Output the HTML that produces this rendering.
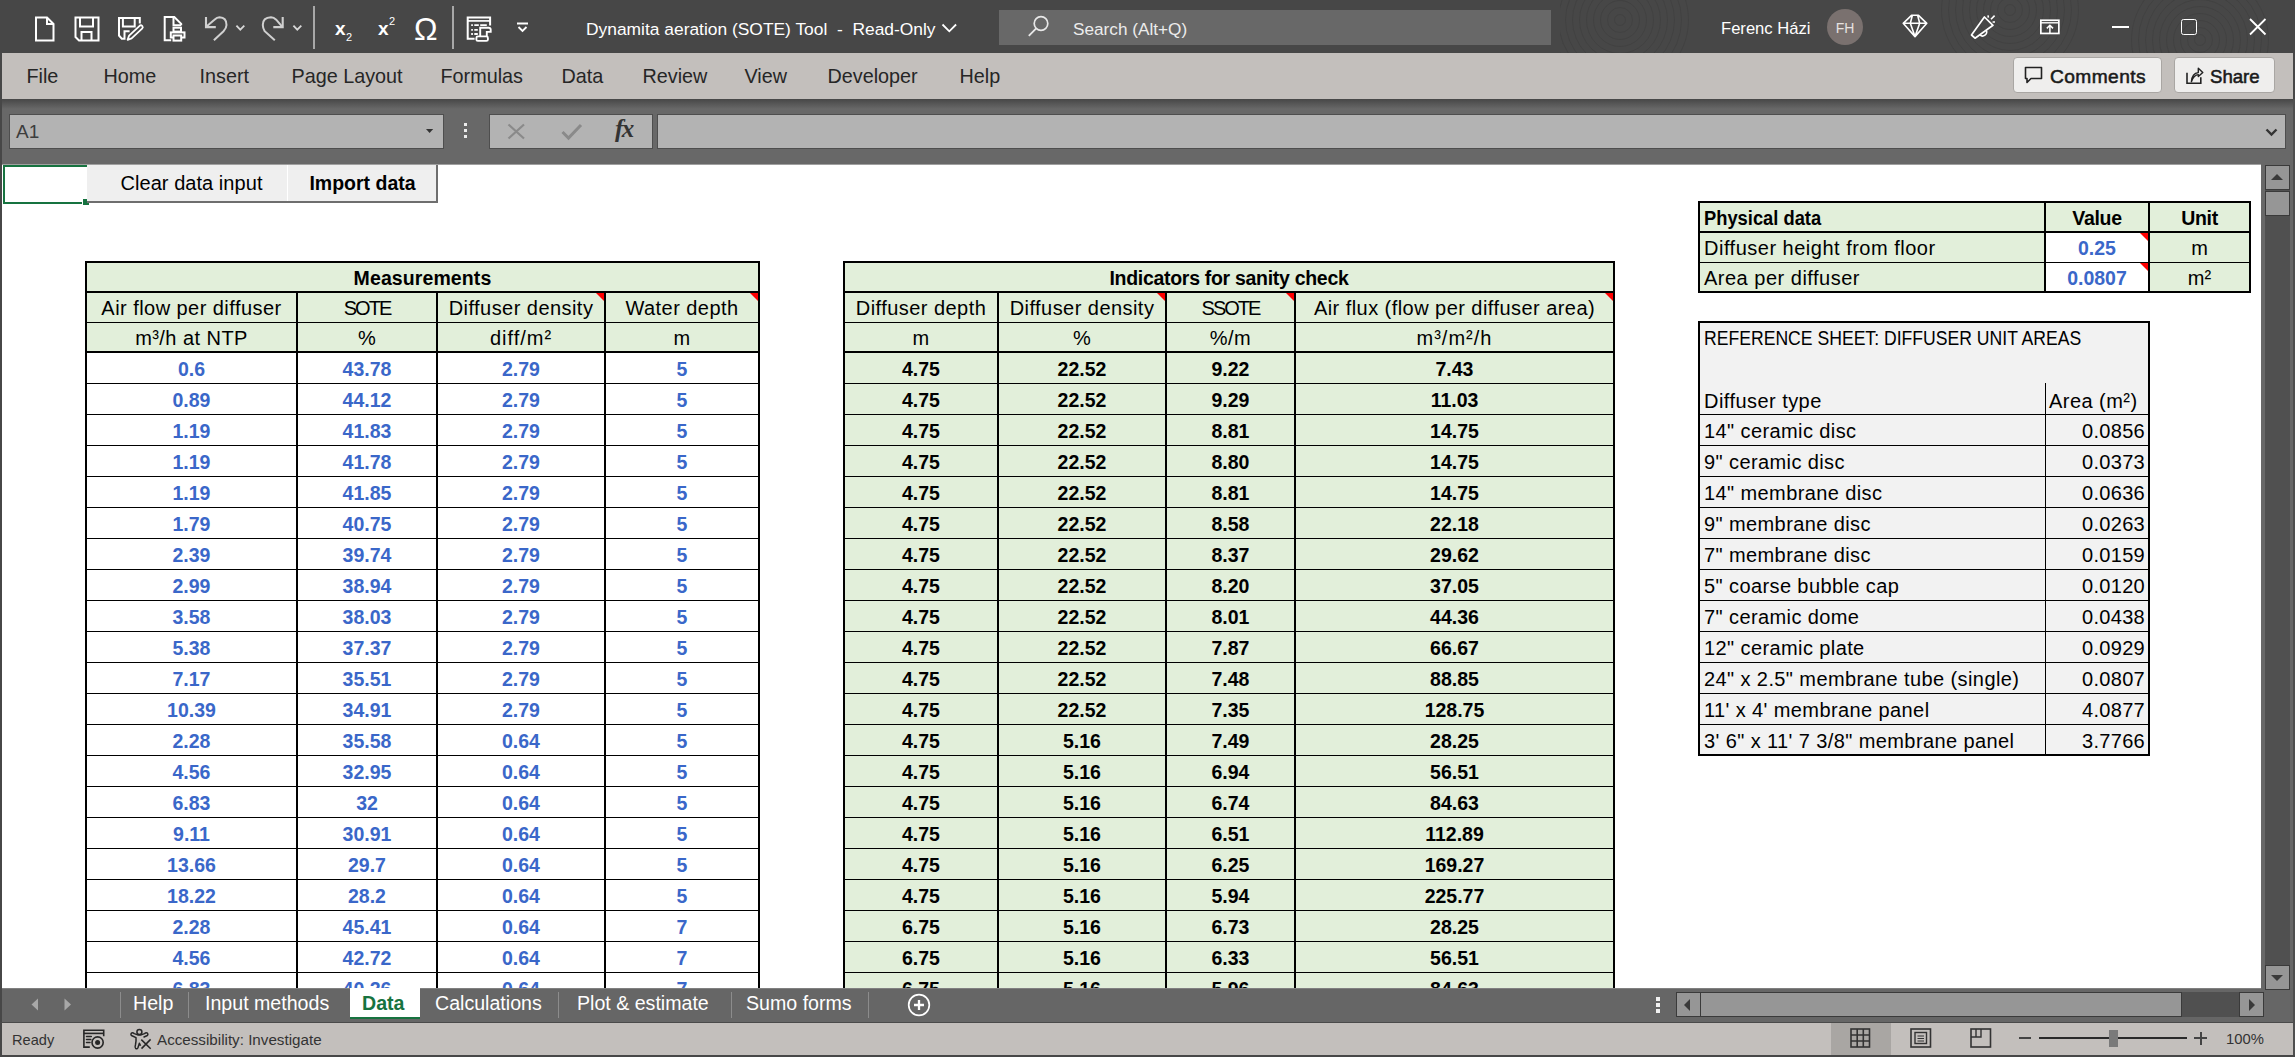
<!DOCTYPE html><html><head><meta charset="utf-8"><title>Dynamita aeration (SOTE) Tool - Excel</title><style>html,body{margin:0;padding:0;}body{width:2295px;height:1057px;overflow:hidden;position:relative;background:#474747;font-family:"Liberation Sans",sans-serif;}div{box-sizing:border-box;}svg{position:absolute;overflow:visible;}</style></head><body><div style="position:absolute;left:0px;top:0px;width:2295px;height:53px;background:#474747;"></div><div style="position:absolute;left:2px;top:53px;width:2291px;height:46px;background:#c3bfbc;"></div><div style="position:absolute;left:2px;top:99px;width:2291px;height:65px;background:#686868;"></div><div style="position:absolute;left:2px;top:99px;width:2291px;height:10px;background:linear-gradient(#474747,#686868);"></div><div style="position:absolute;left:2px;top:164px;width:2259px;height:824px;background:#ffffff;"></div><div style="position:absolute;left:2px;top:164px;width:2259px;height:1px;background:#a0a0a0;"></div><div style="position:absolute;left:2261px;top:164px;width:32px;height:824px;background:#686868;"></div><div style="position:absolute;left:0px;top:988px;width:2295px;height:34px;background:#474747;"></div><div style="position:absolute;left:2px;top:988px;width:2291px;height:34px;background:#666666;"></div><div style="position:absolute;left:2px;top:988px;width:2259px;height:1px;background:#808080;"></div><div style="position:absolute;left:0px;top:1022px;width:2295px;height:1px;background:#4a4a4a;"></div><div style="position:absolute;left:2px;top:1023px;width:2291px;height:32px;background:#c3bfbc;"></div><div style="position:absolute;left:0px;top:1055px;width:2295px;height:2px;background:#474747;"></div><svg style="left:34px;top:16px" width="22" height="26" viewBox="0 0 22 26"><path d="M2 1.5H13L19.5 8V24.5H2Z M13 1.5V8H19.5" fill="none" stroke="#fff" stroke-width="2" stroke-linejoin="miter"/></svg><svg style="left:74px;top:16px" width="26" height="26" viewBox="0 0 26 26"><path d="M1.5 1.5H24.5V24.5H5L1.5 21Z" fill="none" stroke="#fff" stroke-width="2"/><path d="M6 1.5V10.5H19V1.5" fill="none" stroke="#fff" stroke-width="2"/><path d="M7.5 24.5V16H17.5V24.5" fill="none" stroke="#fff" stroke-width="2"/></svg><svg style="left:117px;top:16px" width="28" height="28" viewBox="0 0 28 28"><path d="M12.6 15.2H7.5V22.7H4.8L2 19.5V2.1H22.8V7.4" fill="none" stroke="#fff" stroke-width="2"/><path d="M5.9 2.1V10.5H17.7V2.1" fill="none" stroke="#fff" stroke-width="2"/><path d="M10.6 23.8L12.1 19.6L22.6 9.8Q24 8.6 25.3 10Q26.4 11.4 25.1 12.6L14.6 22.4Z" fill="none" stroke="#fff" stroke-width="1.8" stroke-linejoin="round"/></svg><svg style="left:163px;top:16px" width="24" height="28" viewBox="0 0 24 28"><path d="M8.2 24.2H1.7V1.1H11.3L18.2 7.8V9.3" fill="none" stroke="#fff" stroke-width="2"/><path d="M10.5 1.1V9.3H18.2" fill="none" stroke="#fff" stroke-width="2"/><rect x="10.5" y="11.7" width="7.5" height="3.9" fill="none" stroke="#fff" stroke-width="2"/><rect x="7.8" y="16.4" width="13.7" height="5.1" fill="#474747" stroke="#fff" stroke-width="2"/><rect x="10.5" y="19.5" width="7.7" height="5.1" fill="#474747" stroke="#fff" stroke-width="2"/></svg><svg style="left:204px;top:16px" width="26" height="26" viewBox="0 0 26 26"><path d="M2 1V11.1H11.8" fill="none" stroke="#d0d0d0" stroke-width="2.1"/><path d="M2.8 10.3L10.4 3.7Q13 1.3 15.5 1.3Q22.5 1.5 22.5 9Q22.5 12 19.5 15.2L9.9 24.3" fill="none" stroke="#d0d0d0" stroke-width="2"/></svg><svg style="left:235px;top:23px" width="11" height="8" viewBox="0 0 11 8"><path d="M1.4 2.7L5.3 6.7L9.3 2.7" fill="none" stroke="#d8d8d8" stroke-width="1.8"/></svg><svg style="left:260px;top:16px" width="26" height="26" viewBox="0 0 26 26"><path d="M22.7 1V11.1H13.3" fill="none" stroke="#d0d0d0" stroke-width="2.1"/><path d="M21.9 10.3L16.2 3.7Q13.8 1.3 11 1.3Q2.8 1.5 2.8 9Q2.8 12 4.7 15.2L14.8 24.3" fill="none" stroke="#d0d0d0" stroke-width="2"/></svg><svg style="left:292px;top:23px" width="11" height="8" viewBox="0 0 11 8"><path d="M1.4 2.7L5.3 6.7L9.3 2.7" fill="none" stroke="#d8d8d8" stroke-width="1.8"/></svg><div style="position:absolute;left:313px;top:6px;width:2px;height:43px;background:#a8a8a8;"></div><div style="position:absolute;left:335px;top:13.50px;width:25px;height:30px;line-height:30px;font-size:19px;font-weight:400;color:#ffffff;text-align:left;white-space:nowrap;"><b>x</b></div><div style="position:absolute;left:346px;top:30.00px;width:14px;height:14px;line-height:14px;font-size:11px;font-weight:400;color:#ffffff;text-align:left;white-space:nowrap;">2</div><div style="position:absolute;left:378px;top:13.50px;width:22px;height:30px;line-height:30px;font-size:19px;font-weight:400;color:#ffffff;text-align:left;white-space:nowrap;"><b>x</b></div><div style="position:absolute;left:389px;top:14.00px;width:11px;height:14px;line-height:14px;font-size:11px;font-weight:400;color:#ffffff;text-align:left;white-space:nowrap;">2</div><div style="position:absolute;left:414px;top:12.00px;width:31px;height:34px;line-height:34px;font-size:31.5px;font-weight:400;color:#ffffff;text-align:left;white-space:nowrap;">Ω</div><div style="position:absolute;left:452px;top:6px;width:2px;height:43px;background:#a8a8a8;"></div><svg style="left:466px;top:16px" width="28" height="28" viewBox="0 0 28 28"><path d="M8.6 22.7H1.7V1.6H24.1V9.6" fill="none" stroke="#fff" stroke-width="2"/><path d="M1.7 4.9H24.1" stroke="#fff" stroke-width="1.7"/><path d="M5.2 9.1H6.9M8.3 9.1H12.8M14.2 9.1H20.8M5.2 13.8H6.9M8.3 13.8H11.8M5.2 18H6.9M8.3 18H11.8" stroke="#fff" stroke-width="1.8"/><path d="M14.2 20.4V11.7H22.5Q24.7 11.7 24.7 13.8V15.9H20.8V24.3" fill="#474747" stroke="#fff" stroke-width="1.9"/><rect x="10.4" y="20.4" width="11.5" height="4.5" rx="1.5" fill="#474747" stroke="#fff" stroke-width="1.9"/></svg><svg style="left:516px;top:22px" width="14" height="12" viewBox="0 0 14 12"><path d="M1 1.5H12" stroke="#fff" stroke-width="2"/><path d="M2.5 5L6.5 9L10.5 5" fill="none" stroke="#fff" stroke-width="1.8"/></svg><div style="position:absolute;left:586px;top:14.00px;width:354px;height:30px;line-height:30px;font-size:17.4px;font-weight:400;color:#ffffff;text-align:left;white-space:nowrap;">Dynamita aeration (SOTE) Tool &nbsp;- &nbsp;Read-Only</div><svg style="left:941px;top:23px" width="18" height="12" viewBox="0 0 18 12"><path d="M1.5 1.5L8.3 8.3L15.1 1.5" fill="none" stroke="#fff" stroke-width="1.8"/></svg><div style="position:absolute;left:999px;top:10px;width:552px;height:35px;background:#686868;"></div><svg style="left:1027px;top:15px" width="24" height="24" viewBox="0 0 24 24"><circle cx="14" cy="8.5" r="6.8" fill="none" stroke="#e8e8e8" stroke-width="1.7"/><path d="M9.2 13.3L1.8 20.8" stroke="#e8e8e8" stroke-width="1.8"/></svg><div style="position:absolute;left:1073px;top:13.50px;width:177px;height:30px;line-height:30px;font-size:17.2px;font-weight:400;color:#ececec;text-align:left;white-space:nowrap;">Search (Alt+Q)</div><div style="position:absolute;left:1560px;top:0;width:735px;height:53px;overflow:hidden;"><div style="position:absolute;left:54px;top:14px;width:12px;height:12px;border-radius:50%;border:1px solid rgba(60,60,60,0.5);"></div><div style="position:absolute;left:47px;top:7px;width:26px;height:26px;border-radius:50%;border:1px solid rgba(60,60,60,0.5);"></div><div style="position:absolute;left:40px;top:0px;width:40px;height:40px;border-radius:50%;border:1px solid rgba(60,60,60,0.5);"></div><div style="position:absolute;left:33px;top:-7px;width:54px;height:54px;border-radius:50%;border:1px solid rgba(60,60,60,0.5);"></div><div style="position:absolute;left:26px;top:-14px;width:68px;height:68px;border-radius:50%;border:1px solid rgba(60,60,60,0.5);"></div><div style="position:absolute;left:19px;top:-21px;width:82px;height:82px;border-radius:50%;border:1px solid rgba(60,60,60,0.5);"></div><div style="position:absolute;left:12px;top:-28px;width:96px;height:96px;border-radius:50%;border:1px solid rgba(60,60,60,0.5);"></div><div style="position:absolute;left:5px;top:-35px;width:110px;height:110px;border-radius:50%;border:1px solid rgba(60,60,60,0.5);"></div><div style="position:absolute;left:-2px;top:-42px;width:124px;height:124px;border-radius:50%;border:1px solid rgba(60,60,60,0.5);"></div><div style="position:absolute;left:-9px;top:-49px;width:138px;height:138px;border-radius:50%;border:1px solid rgba(60,60,60,0.5);"></div><div style="position:absolute;left:444px;top:4px;width:12px;height:12px;border-radius:50%;border:1px solid rgba(60,60,60,0.5);"></div><div style="position:absolute;left:437px;top:-3px;width:26px;height:26px;border-radius:50%;border:1px solid rgba(60,60,60,0.5);"></div><div style="position:absolute;left:430px;top:-10px;width:40px;height:40px;border-radius:50%;border:1px solid rgba(60,60,60,0.5);"></div><div style="position:absolute;left:423px;top:-17px;width:54px;height:54px;border-radius:50%;border:1px solid rgba(60,60,60,0.5);"></div><div style="position:absolute;left:416px;top:-24px;width:68px;height:68px;border-radius:50%;border:1px solid rgba(60,60,60,0.5);"></div><div style="position:absolute;left:409px;top:-31px;width:82px;height:82px;border-radius:50%;border:1px solid rgba(60,60,60,0.5);"></div><div style="position:absolute;left:402px;top:-38px;width:96px;height:96px;border-radius:50%;border:1px solid rgba(60,60,60,0.5);"></div><div style="position:absolute;left:395px;top:-45px;width:110px;height:110px;border-radius:50%;border:1px solid rgba(60,60,60,0.5);"></div><div style="position:absolute;left:388px;top:-52px;width:124px;height:124px;border-radius:50%;border:1px solid rgba(60,60,60,0.5);"></div><div style="position:absolute;left:381px;top:-59px;width:138px;height:138px;border-radius:50%;border:1px solid rgba(60,60,60,0.5);"></div><div style="position:absolute;left:634px;top:34px;width:12px;height:12px;border-radius:50%;border:1px solid rgba(60,60,60,0.5);"></div><div style="position:absolute;left:627px;top:27px;width:26px;height:26px;border-radius:50%;border:1px solid rgba(60,60,60,0.5);"></div><div style="position:absolute;left:620px;top:20px;width:40px;height:40px;border-radius:50%;border:1px solid rgba(60,60,60,0.5);"></div><div style="position:absolute;left:613px;top:13px;width:54px;height:54px;border-radius:50%;border:1px solid rgba(60,60,60,0.5);"></div><div style="position:absolute;left:606px;top:6px;width:68px;height:68px;border-radius:50%;border:1px solid rgba(60,60,60,0.5);"></div><div style="position:absolute;left:599px;top:-1px;width:82px;height:82px;border-radius:50%;border:1px solid rgba(60,60,60,0.5);"></div><div style="position:absolute;left:592px;top:-8px;width:96px;height:96px;border-radius:50%;border:1px solid rgba(60,60,60,0.5);"></div><div style="position:absolute;left:585px;top:-15px;width:110px;height:110px;border-radius:50%;border:1px solid rgba(60,60,60,0.5);"></div><div style="position:absolute;left:578px;top:-22px;width:124px;height:124px;border-radius:50%;border:1px solid rgba(60,60,60,0.5);"></div><div style="position:absolute;left:571px;top:-29px;width:138px;height:138px;border-radius:50%;border:1px solid rgba(60,60,60,0.5);"></div></div><div style="position:absolute;left:1721px;top:13.50px;width:94px;height:30px;line-height:30px;font-size:16.6px;font-weight:400;color:#ffffff;text-align:left;white-space:nowrap;">Ferenc Házi</div><div style="position:absolute;left:1827px;top:9px;width:36px;height:36px;border-radius:50%;background:#7a716f;"></div><div style="position:absolute;left:1827px;top:13.00px;width:36px;height:30px;line-height:30px;font-size:14px;font-weight:400;color:#e6e2e0;text-align:center;white-space:nowrap;">FH</div><svg style="left:1902px;top:14px" width="27" height="25" viewBox="0 0 27 25"><path d="M9.5 1.3H16.5L24.8 9.3L13 22.6L1.2 9.3Z M1.2 9.3H24.8 M10.3 1.6L8.3 9.3L13 22.6 M15.7 1.6L17.7 9.3L13 22.6" fill="none" stroke="#fff" stroke-width="1.6" stroke-linejoin="round"/></svg><svg style="left:1970px;top:13px" width="28" height="28" viewBox="0 0 28 28"><path d="M14.4 4L23 12.3L5 25.2L1.5 22Z" fill="none" stroke="#fff" stroke-width="1.7" stroke-linejoin="round"/><path d="M9.8 21.8A4 4 0 0 0 16.2 17.2" fill="none" stroke="#fff" stroke-width="1.6"/><path d="M18 2.3L18.4 4.6M21 6.2L24.6 2.6M22.6 9H25" stroke="#fff" stroke-width="1.6"/></svg><svg style="left:2039px;top:18px" width="23" height="18" viewBox="0 0 23 18"><rect x="1.85" y="2.25" width="18" height="13.2" fill="none" stroke="#fff" stroke-width="1.7"/><path d="M1.85 4.8H19.85" stroke="#fff" stroke-width="1.4"/><path d="M10.9 15.5V7.5M7.8 10.4L10.9 7.3L14 10.4" fill="none" stroke="#fff" stroke-width="1.5"/></svg><div style="position:absolute;left:2112px;top:26px;width:17px;height:2px;background:#fff;"></div><div style="position:absolute;left:2181px;top:19px;width:16px;height:16px;border:1.8px solid #fff;border-radius:2.5px;"></div><svg style="left:2249px;top:18px" width="18" height="18" viewBox="0 0 18 18"><path d="M1 1L16.5 16.5M16.5 1L1 16.5" stroke="#fff" stroke-width="1.8"/></svg><div style="position:absolute;left:26.5px;top:61.30px;width:200.5px;height:30px;line-height:30px;font-size:19.8px;font-weight:400;color:#262626;text-align:left;white-space:nowrap;">File</div><div style="position:absolute;left:103.5px;top:61.30px;width:200.5px;height:30px;line-height:30px;font-size:19.8px;font-weight:400;color:#262626;text-align:left;white-space:nowrap;">Home</div><div style="position:absolute;left:199.5px;top:61.30px;width:200.5px;height:30px;line-height:30px;font-size:19.8px;font-weight:400;color:#262626;text-align:left;white-space:nowrap;">Insert</div><div style="position:absolute;left:291.5px;top:61.30px;width:200.5px;height:30px;line-height:30px;font-size:19.8px;font-weight:400;color:#262626;text-align:left;white-space:nowrap;">Page Layout</div><div style="position:absolute;left:440.5px;top:61.30px;width:200.5px;height:30px;line-height:30px;font-size:19.8px;font-weight:400;color:#262626;text-align:left;white-space:nowrap;">Formulas</div><div style="position:absolute;left:561.5px;top:61.30px;width:200.5px;height:30px;line-height:30px;font-size:19.8px;font-weight:400;color:#262626;text-align:left;white-space:nowrap;">Data</div><div style="position:absolute;left:642.5px;top:61.30px;width:200.5px;height:30px;line-height:30px;font-size:19.8px;font-weight:400;color:#262626;text-align:left;white-space:nowrap;">Review</div><div style="position:absolute;left:744.5px;top:61.30px;width:200.5px;height:30px;line-height:30px;font-size:19.8px;font-weight:400;color:#262626;text-align:left;white-space:nowrap;">View</div><div style="position:absolute;left:827.5px;top:61.30px;width:200.5px;height:30px;line-height:30px;font-size:19.8px;font-weight:400;color:#262626;text-align:left;white-space:nowrap;">Developer</div><div style="position:absolute;left:959.5px;top:61.30px;width:200.5px;height:30px;line-height:30px;font-size:19.8px;font-weight:400;color:#262626;text-align:left;white-space:nowrap;">Help</div><div style="position:absolute;left:2013px;top:57px;width:149px;height:36px;background:#efeeed;border:1px solid #a9a6a3;border-radius:4px;"></div><svg style="left:2024px;top:66px" width="20" height="18" viewBox="0 0 20 18"><path d="M1.5 1.5H17.5V12.5H7L3 16.5V12.5H1.5Z" fill="none" stroke="#222" stroke-width="1.6" stroke-linejoin="round"/></svg><div style="position:absolute;left:2050px;top:62.30px;width:110px;height:30px;line-height:30px;font-size:19.2px;font-weight:400;color:#1a1a1a;text-align:left;white-space:nowrap;letter-spacing:0.4px;-webkit-text-stroke:0.55px #1a1a1a;">Comments</div><div style="position:absolute;left:2174px;top:57px;width:101px;height:36px;background:#efeeed;border:1px solid #a9a6a3;border-radius:4px;"></div><svg style="left:2184px;top:64px" width="22" height="22" viewBox="0 0 22 22"><path d="M3 8.8V19.3H16.8V13.3" fill="none" stroke="#222" stroke-width="1.6"/><path d="M7.4 17.7Q8 9.2 14.3 8.6V4.2L18.8 8.4L14.3 12.6V10.6Q10 10.6 7.4 17.7Z" fill="none" stroke="#222" stroke-width="1.4" stroke-linejoin="round"/></svg><div style="position:absolute;left:2210px;top:62.30px;width:65px;height:30px;line-height:30px;font-size:18.6px;font-weight:400;color:#1a1a1a;text-align:left;white-space:nowrap;-webkit-text-stroke:0.55px #1a1a1a;">Share</div><div style="position:absolute;left:9px;top:114px;width:435px;height:35px;background:#b3b3b3;border:1px solid #4e4e4e;"></div><div style="position:absolute;left:16px;top:117.10px;width:184px;height:30px;line-height:30px;font-size:19px;font-weight:400;color:#3d3d3d;text-align:left;white-space:nowrap;">A1</div><svg style="left:425px;top:128px" width="10" height="7" viewBox="0 0 10 7"><path d="M1 1H8.2L4.6 5Z" fill="#333"/></svg><div style="position:absolute;left:464px;top:123px;width:3px;height:3px;background:#ececec;"></div><div style="position:absolute;left:464px;top:129px;width:3px;height:3px;background:#ececec;"></div><div style="position:absolute;left:464px;top:135px;width:3px;height:3px;background:#ececec;"></div><div style="position:absolute;left:489px;top:114px;width:164px;height:35px;background:#b3b3b3;border:1px solid #4e4e4e;"></div><svg style="left:507px;top:123px" width="20" height="17" viewBox="0 0 20 17"><path d="M1.5 1.5L17 15.5M17 1.5L1.5 15.5" stroke="#8a8a8a" stroke-width="2.2"/></svg><svg style="left:561px;top:123px" width="22" height="17" viewBox="0 0 22 17"><path d="M1.5 9L7.5 15L20 2" fill="none" stroke="#8a8a8a" stroke-width="3"/></svg><div style="position:absolute;left:615px;top:114.00px;width:35px;height:30px;line-height:30px;font-size:25px;font-weight:700;color:#333;text-align:left;white-space:nowrap;letter-spacing:-1.5px;font-family:'Liberation Serif',serif;"><i>fx</i></div><div style="position:absolute;left:657px;top:114px;width:1629px;height:35px;background:#b3b3b3;border:1px solid #4e4e4e;"></div><svg style="left:2265px;top:128px" width="14" height="10" viewBox="0 0 14 10"><path d="M1.5 1.5L6.5 6.5L11.5 1.5" fill="none" stroke="#333" stroke-width="2.4"/></svg><div style="position:absolute;left:3px;top:165px;width:86px;height:39px;border:2px solid #177340;"></div><div style="position:absolute;left:82px;top:198px;width:8px;height:8px;background:#ffffff;"></div><div style="position:absolute;left:83px;top:199px;width:6px;height:6px;background:#177340;"></div><div style="position:absolute;left:87px;top:165px;width:200px;height:38px;background:#efefef;"></div><div style="position:absolute;left:288px;top:165px;width:150px;height:38px;background:#efefef;"></div><div style="position:absolute;left:287px;top:165px;width:1px;height:36px;background:#ffffff;"></div><div style="position:absolute;left:87px;top:201px;width:351px;height:2px;background:#6e6e6e;"></div><div style="position:absolute;left:436px;top:165px;width:2px;height:38px;background:#6e6e6e;"></div><div style="position:absolute;left:87px;top:167.50px;width:209px;height:30px;line-height:30px;font-size:20px;font-weight:400;color:#000;text-align:center;white-space:nowrap;letter-spacing:0.05px;">Clear data input</div><div style="position:absolute;left:288px;top:167.70px;width:149px;height:30px;line-height:30px;font-size:19.5px;font-weight:700;color:#000;text-align:center;white-space:nowrap;">Import data</div><div style="position:absolute;left:0;top:0;width:2295px;height:988px;overflow:hidden;"><div style="position:absolute;left:85px;top:261px;width:675px;height:92px;background:#e2efda;"></div><div style="position:absolute;left:85px;top:353px;width:675px;height:635px;background:#ffffff;"></div><div style="position:absolute;left:85px;top:261px;width:675px;height:2px;background:#000;"></div><div style="position:absolute;left:85px;top:291px;width:675px;height:2px;background:#000;"></div><div style="position:absolute;left:85px;top:322px;width:675px;height:1px;background:#000;"></div><div style="position:absolute;left:85px;top:351px;width:675px;height:2px;background:#000;"></div><div style="position:absolute;left:85px;top:383px;width:675px;height:1px;background:#000;"></div><div style="position:absolute;left:85px;top:414px;width:675px;height:1px;background:#000;"></div><div style="position:absolute;left:85px;top:445px;width:675px;height:1px;background:#000;"></div><div style="position:absolute;left:85px;top:476px;width:675px;height:1px;background:#000;"></div><div style="position:absolute;left:85px;top:507px;width:675px;height:1px;background:#000;"></div><div style="position:absolute;left:85px;top:538px;width:675px;height:1px;background:#000;"></div><div style="position:absolute;left:85px;top:569px;width:675px;height:1px;background:#000;"></div><div style="position:absolute;left:85px;top:600px;width:675px;height:1px;background:#000;"></div><div style="position:absolute;left:85px;top:631px;width:675px;height:1px;background:#000;"></div><div style="position:absolute;left:85px;top:662px;width:675px;height:1px;background:#000;"></div><div style="position:absolute;left:85px;top:693px;width:675px;height:1px;background:#000;"></div><div style="position:absolute;left:85px;top:724px;width:675px;height:1px;background:#000;"></div><div style="position:absolute;left:85px;top:755px;width:675px;height:1px;background:#000;"></div><div style="position:absolute;left:85px;top:786px;width:675px;height:1px;background:#000;"></div><div style="position:absolute;left:85px;top:817px;width:675px;height:1px;background:#000;"></div><div style="position:absolute;left:85px;top:848px;width:675px;height:1px;background:#000;"></div><div style="position:absolute;left:85px;top:879px;width:675px;height:1px;background:#000;"></div><div style="position:absolute;left:85px;top:910px;width:675px;height:1px;background:#000;"></div><div style="position:absolute;left:85px;top:941px;width:675px;height:1px;background:#000;"></div><div style="position:absolute;left:85px;top:972px;width:675px;height:1px;background:#000;"></div><div style="position:absolute;left:85px;top:261px;width:2px;height:727px;background:#000;"></div><div style="position:absolute;left:758px;top:261px;width:2px;height:727px;background:#000;"></div><div style="position:absolute;left:296px;top:291px;width:2px;height:697px;background:#000;"></div><div style="position:absolute;left:436px;top:291px;width:2px;height:697px;background:#000;"></div><div style="position:absolute;left:604px;top:291px;width:2px;height:697px;background:#000;"></div><div style="position:absolute;left:87px;top:263.00px;width:671px;height:30px;line-height:30px;font-size:19.5px;font-weight:700;color:#000;text-align:center;white-space:nowrap;letter-spacing:0.1px;">Measurements</div><div style="position:absolute;left:87px;top:293.00px;width:209px;height:30px;line-height:30px;font-size:20px;font-weight:400;color:#000;text-align:center;white-space:nowrap;letter-spacing:0.45px;">Air flow per diffuser</div><div style="position:absolute;left:87px;top:323.00px;width:209px;height:30px;line-height:30px;font-size:20px;font-weight:400;color:#000;text-align:center;white-space:nowrap;letter-spacing:0.45px;">m³/h at NTP</div><div style="position:absolute;left:87px;top:354.00px;width:209px;height:30px;line-height:30px;font-size:19.5px;font-weight:700;color:#3a67c9;text-align:center;white-space:nowrap;">0.6</div><div style="position:absolute;left:87px;top:385.00px;width:209px;height:30px;line-height:30px;font-size:19.5px;font-weight:700;color:#3a67c9;text-align:center;white-space:nowrap;">0.89</div><div style="position:absolute;left:87px;top:416.00px;width:209px;height:30px;line-height:30px;font-size:19.5px;font-weight:700;color:#3a67c9;text-align:center;white-space:nowrap;">1.19</div><div style="position:absolute;left:87px;top:447.00px;width:209px;height:30px;line-height:30px;font-size:19.5px;font-weight:700;color:#3a67c9;text-align:center;white-space:nowrap;">1.19</div><div style="position:absolute;left:87px;top:478.00px;width:209px;height:30px;line-height:30px;font-size:19.5px;font-weight:700;color:#3a67c9;text-align:center;white-space:nowrap;">1.19</div><div style="position:absolute;left:87px;top:509.00px;width:209px;height:30px;line-height:30px;font-size:19.5px;font-weight:700;color:#3a67c9;text-align:center;white-space:nowrap;">1.79</div><div style="position:absolute;left:87px;top:540.00px;width:209px;height:30px;line-height:30px;font-size:19.5px;font-weight:700;color:#3a67c9;text-align:center;white-space:nowrap;">2.39</div><div style="position:absolute;left:87px;top:571.00px;width:209px;height:30px;line-height:30px;font-size:19.5px;font-weight:700;color:#3a67c9;text-align:center;white-space:nowrap;">2.99</div><div style="position:absolute;left:87px;top:602.00px;width:209px;height:30px;line-height:30px;font-size:19.5px;font-weight:700;color:#3a67c9;text-align:center;white-space:nowrap;">3.58</div><div style="position:absolute;left:87px;top:633.00px;width:209px;height:30px;line-height:30px;font-size:19.5px;font-weight:700;color:#3a67c9;text-align:center;white-space:nowrap;">5.38</div><div style="position:absolute;left:87px;top:664.00px;width:209px;height:30px;line-height:30px;font-size:19.5px;font-weight:700;color:#3a67c9;text-align:center;white-space:nowrap;">7.17</div><div style="position:absolute;left:87px;top:695.00px;width:209px;height:30px;line-height:30px;font-size:19.5px;font-weight:700;color:#3a67c9;text-align:center;white-space:nowrap;">10.39</div><div style="position:absolute;left:87px;top:726.00px;width:209px;height:30px;line-height:30px;font-size:19.5px;font-weight:700;color:#3a67c9;text-align:center;white-space:nowrap;">2.28</div><div style="position:absolute;left:87px;top:757.00px;width:209px;height:30px;line-height:30px;font-size:19.5px;font-weight:700;color:#3a67c9;text-align:center;white-space:nowrap;">4.56</div><div style="position:absolute;left:87px;top:788.00px;width:209px;height:30px;line-height:30px;font-size:19.5px;font-weight:700;color:#3a67c9;text-align:center;white-space:nowrap;">6.83</div><div style="position:absolute;left:87px;top:819.00px;width:209px;height:30px;line-height:30px;font-size:19.5px;font-weight:700;color:#3a67c9;text-align:center;white-space:nowrap;">9.11</div><div style="position:absolute;left:87px;top:850.00px;width:209px;height:30px;line-height:30px;font-size:19.5px;font-weight:700;color:#3a67c9;text-align:center;white-space:nowrap;">13.66</div><div style="position:absolute;left:87px;top:881.00px;width:209px;height:30px;line-height:30px;font-size:19.5px;font-weight:700;color:#3a67c9;text-align:center;white-space:nowrap;">18.22</div><div style="position:absolute;left:87px;top:912.00px;width:209px;height:30px;line-height:30px;font-size:19.5px;font-weight:700;color:#3a67c9;text-align:center;white-space:nowrap;">2.28</div><div style="position:absolute;left:87px;top:943.00px;width:209px;height:30px;line-height:30px;font-size:19.5px;font-weight:700;color:#3a67c9;text-align:center;white-space:nowrap;">4.56</div><div style="position:absolute;left:87px;top:974.00px;width:209px;height:30px;line-height:30px;font-size:19.5px;font-weight:700;color:#3a67c9;text-align:center;white-space:nowrap;">6.83</div><div style="position:absolute;left:298px;top:293.00px;width:138px;height:30px;line-height:30px;font-size:20px;font-weight:400;color:#000;text-align:center;white-space:nowrap;letter-spacing:-2.0px;">SOTE</div><div style="position:absolute;left:298px;top:323.00px;width:138px;height:30px;line-height:30px;font-size:20px;font-weight:400;color:#000;text-align:center;white-space:nowrap;letter-spacing:0.45px;">%</div><div style="position:absolute;left:298px;top:354.00px;width:138px;height:30px;line-height:30px;font-size:19.5px;font-weight:700;color:#3a67c9;text-align:center;white-space:nowrap;">43.78</div><div style="position:absolute;left:298px;top:385.00px;width:138px;height:30px;line-height:30px;font-size:19.5px;font-weight:700;color:#3a67c9;text-align:center;white-space:nowrap;">44.12</div><div style="position:absolute;left:298px;top:416.00px;width:138px;height:30px;line-height:30px;font-size:19.5px;font-weight:700;color:#3a67c9;text-align:center;white-space:nowrap;">41.83</div><div style="position:absolute;left:298px;top:447.00px;width:138px;height:30px;line-height:30px;font-size:19.5px;font-weight:700;color:#3a67c9;text-align:center;white-space:nowrap;">41.78</div><div style="position:absolute;left:298px;top:478.00px;width:138px;height:30px;line-height:30px;font-size:19.5px;font-weight:700;color:#3a67c9;text-align:center;white-space:nowrap;">41.85</div><div style="position:absolute;left:298px;top:509.00px;width:138px;height:30px;line-height:30px;font-size:19.5px;font-weight:700;color:#3a67c9;text-align:center;white-space:nowrap;">40.75</div><div style="position:absolute;left:298px;top:540.00px;width:138px;height:30px;line-height:30px;font-size:19.5px;font-weight:700;color:#3a67c9;text-align:center;white-space:nowrap;">39.74</div><div style="position:absolute;left:298px;top:571.00px;width:138px;height:30px;line-height:30px;font-size:19.5px;font-weight:700;color:#3a67c9;text-align:center;white-space:nowrap;">38.94</div><div style="position:absolute;left:298px;top:602.00px;width:138px;height:30px;line-height:30px;font-size:19.5px;font-weight:700;color:#3a67c9;text-align:center;white-space:nowrap;">38.03</div><div style="position:absolute;left:298px;top:633.00px;width:138px;height:30px;line-height:30px;font-size:19.5px;font-weight:700;color:#3a67c9;text-align:center;white-space:nowrap;">37.37</div><div style="position:absolute;left:298px;top:664.00px;width:138px;height:30px;line-height:30px;font-size:19.5px;font-weight:700;color:#3a67c9;text-align:center;white-space:nowrap;">35.51</div><div style="position:absolute;left:298px;top:695.00px;width:138px;height:30px;line-height:30px;font-size:19.5px;font-weight:700;color:#3a67c9;text-align:center;white-space:nowrap;">34.91</div><div style="position:absolute;left:298px;top:726.00px;width:138px;height:30px;line-height:30px;font-size:19.5px;font-weight:700;color:#3a67c9;text-align:center;white-space:nowrap;">35.58</div><div style="position:absolute;left:298px;top:757.00px;width:138px;height:30px;line-height:30px;font-size:19.5px;font-weight:700;color:#3a67c9;text-align:center;white-space:nowrap;">32.95</div><div style="position:absolute;left:298px;top:788.00px;width:138px;height:30px;line-height:30px;font-size:19.5px;font-weight:700;color:#3a67c9;text-align:center;white-space:nowrap;">32</div><div style="position:absolute;left:298px;top:819.00px;width:138px;height:30px;line-height:30px;font-size:19.5px;font-weight:700;color:#3a67c9;text-align:center;white-space:nowrap;">30.91</div><div style="position:absolute;left:298px;top:850.00px;width:138px;height:30px;line-height:30px;font-size:19.5px;font-weight:700;color:#3a67c9;text-align:center;white-space:nowrap;">29.7</div><div style="position:absolute;left:298px;top:881.00px;width:138px;height:30px;line-height:30px;font-size:19.5px;font-weight:700;color:#3a67c9;text-align:center;white-space:nowrap;">28.2</div><div style="position:absolute;left:298px;top:912.00px;width:138px;height:30px;line-height:30px;font-size:19.5px;font-weight:700;color:#3a67c9;text-align:center;white-space:nowrap;">45.41</div><div style="position:absolute;left:298px;top:943.00px;width:138px;height:30px;line-height:30px;font-size:19.5px;font-weight:700;color:#3a67c9;text-align:center;white-space:nowrap;">42.72</div><div style="position:absolute;left:298px;top:974.00px;width:138px;height:30px;line-height:30px;font-size:19.5px;font-weight:700;color:#3a67c9;text-align:center;white-space:nowrap;">40.26</div><div style="position:absolute;left:438px;top:293.00px;width:166px;height:30px;line-height:30px;font-size:20px;font-weight:400;color:#000;text-align:center;white-space:nowrap;letter-spacing:0.45px;">Diffuser density</div><div style="position:absolute;left:438px;top:323.00px;width:166px;height:30px;line-height:30px;font-size:20px;font-weight:400;color:#000;text-align:center;white-space:nowrap;letter-spacing:1.0px;">diff/m²</div><div style="position:absolute;left:596px;top:293px;width:0;height:0;border-top:8px solid #ff0000;border-left:8px solid transparent;"></div><div style="position:absolute;left:438px;top:354.00px;width:166px;height:30px;line-height:30px;font-size:19.5px;font-weight:700;color:#3a67c9;text-align:center;white-space:nowrap;">2.79</div><div style="position:absolute;left:438px;top:385.00px;width:166px;height:30px;line-height:30px;font-size:19.5px;font-weight:700;color:#3a67c9;text-align:center;white-space:nowrap;">2.79</div><div style="position:absolute;left:438px;top:416.00px;width:166px;height:30px;line-height:30px;font-size:19.5px;font-weight:700;color:#3a67c9;text-align:center;white-space:nowrap;">2.79</div><div style="position:absolute;left:438px;top:447.00px;width:166px;height:30px;line-height:30px;font-size:19.5px;font-weight:700;color:#3a67c9;text-align:center;white-space:nowrap;">2.79</div><div style="position:absolute;left:438px;top:478.00px;width:166px;height:30px;line-height:30px;font-size:19.5px;font-weight:700;color:#3a67c9;text-align:center;white-space:nowrap;">2.79</div><div style="position:absolute;left:438px;top:509.00px;width:166px;height:30px;line-height:30px;font-size:19.5px;font-weight:700;color:#3a67c9;text-align:center;white-space:nowrap;">2.79</div><div style="position:absolute;left:438px;top:540.00px;width:166px;height:30px;line-height:30px;font-size:19.5px;font-weight:700;color:#3a67c9;text-align:center;white-space:nowrap;">2.79</div><div style="position:absolute;left:438px;top:571.00px;width:166px;height:30px;line-height:30px;font-size:19.5px;font-weight:700;color:#3a67c9;text-align:center;white-space:nowrap;">2.79</div><div style="position:absolute;left:438px;top:602.00px;width:166px;height:30px;line-height:30px;font-size:19.5px;font-weight:700;color:#3a67c9;text-align:center;white-space:nowrap;">2.79</div><div style="position:absolute;left:438px;top:633.00px;width:166px;height:30px;line-height:30px;font-size:19.5px;font-weight:700;color:#3a67c9;text-align:center;white-space:nowrap;">2.79</div><div style="position:absolute;left:438px;top:664.00px;width:166px;height:30px;line-height:30px;font-size:19.5px;font-weight:700;color:#3a67c9;text-align:center;white-space:nowrap;">2.79</div><div style="position:absolute;left:438px;top:695.00px;width:166px;height:30px;line-height:30px;font-size:19.5px;font-weight:700;color:#3a67c9;text-align:center;white-space:nowrap;">2.79</div><div style="position:absolute;left:438px;top:726.00px;width:166px;height:30px;line-height:30px;font-size:19.5px;font-weight:700;color:#3a67c9;text-align:center;white-space:nowrap;">0.64</div><div style="position:absolute;left:438px;top:757.00px;width:166px;height:30px;line-height:30px;font-size:19.5px;font-weight:700;color:#3a67c9;text-align:center;white-space:nowrap;">0.64</div><div style="position:absolute;left:438px;top:788.00px;width:166px;height:30px;line-height:30px;font-size:19.5px;font-weight:700;color:#3a67c9;text-align:center;white-space:nowrap;">0.64</div><div style="position:absolute;left:438px;top:819.00px;width:166px;height:30px;line-height:30px;font-size:19.5px;font-weight:700;color:#3a67c9;text-align:center;white-space:nowrap;">0.64</div><div style="position:absolute;left:438px;top:850.00px;width:166px;height:30px;line-height:30px;font-size:19.5px;font-weight:700;color:#3a67c9;text-align:center;white-space:nowrap;">0.64</div><div style="position:absolute;left:438px;top:881.00px;width:166px;height:30px;line-height:30px;font-size:19.5px;font-weight:700;color:#3a67c9;text-align:center;white-space:nowrap;">0.64</div><div style="position:absolute;left:438px;top:912.00px;width:166px;height:30px;line-height:30px;font-size:19.5px;font-weight:700;color:#3a67c9;text-align:center;white-space:nowrap;">0.64</div><div style="position:absolute;left:438px;top:943.00px;width:166px;height:30px;line-height:30px;font-size:19.5px;font-weight:700;color:#3a67c9;text-align:center;white-space:nowrap;">0.64</div><div style="position:absolute;left:438px;top:974.00px;width:166px;height:30px;line-height:30px;font-size:19.5px;font-weight:700;color:#3a67c9;text-align:center;white-space:nowrap;">0.64</div><div style="position:absolute;left:606px;top:293.00px;width:152px;height:30px;line-height:30px;font-size:20px;font-weight:400;color:#000;text-align:center;white-space:nowrap;letter-spacing:0.45px;">Water depth</div><div style="position:absolute;left:606px;top:323.00px;width:152px;height:30px;line-height:30px;font-size:20px;font-weight:400;color:#000;text-align:center;white-space:nowrap;letter-spacing:0.45px;">m</div><div style="position:absolute;left:750px;top:293px;width:0;height:0;border-top:8px solid #ff0000;border-left:8px solid transparent;"></div><div style="position:absolute;left:606px;top:354.00px;width:152px;height:30px;line-height:30px;font-size:19.5px;font-weight:700;color:#3a67c9;text-align:center;white-space:nowrap;">5</div><div style="position:absolute;left:606px;top:385.00px;width:152px;height:30px;line-height:30px;font-size:19.5px;font-weight:700;color:#3a67c9;text-align:center;white-space:nowrap;">5</div><div style="position:absolute;left:606px;top:416.00px;width:152px;height:30px;line-height:30px;font-size:19.5px;font-weight:700;color:#3a67c9;text-align:center;white-space:nowrap;">5</div><div style="position:absolute;left:606px;top:447.00px;width:152px;height:30px;line-height:30px;font-size:19.5px;font-weight:700;color:#3a67c9;text-align:center;white-space:nowrap;">5</div><div style="position:absolute;left:606px;top:478.00px;width:152px;height:30px;line-height:30px;font-size:19.5px;font-weight:700;color:#3a67c9;text-align:center;white-space:nowrap;">5</div><div style="position:absolute;left:606px;top:509.00px;width:152px;height:30px;line-height:30px;font-size:19.5px;font-weight:700;color:#3a67c9;text-align:center;white-space:nowrap;">5</div><div style="position:absolute;left:606px;top:540.00px;width:152px;height:30px;line-height:30px;font-size:19.5px;font-weight:700;color:#3a67c9;text-align:center;white-space:nowrap;">5</div><div style="position:absolute;left:606px;top:571.00px;width:152px;height:30px;line-height:30px;font-size:19.5px;font-weight:700;color:#3a67c9;text-align:center;white-space:nowrap;">5</div><div style="position:absolute;left:606px;top:602.00px;width:152px;height:30px;line-height:30px;font-size:19.5px;font-weight:700;color:#3a67c9;text-align:center;white-space:nowrap;">5</div><div style="position:absolute;left:606px;top:633.00px;width:152px;height:30px;line-height:30px;font-size:19.5px;font-weight:700;color:#3a67c9;text-align:center;white-space:nowrap;">5</div><div style="position:absolute;left:606px;top:664.00px;width:152px;height:30px;line-height:30px;font-size:19.5px;font-weight:700;color:#3a67c9;text-align:center;white-space:nowrap;">5</div><div style="position:absolute;left:606px;top:695.00px;width:152px;height:30px;line-height:30px;font-size:19.5px;font-weight:700;color:#3a67c9;text-align:center;white-space:nowrap;">5</div><div style="position:absolute;left:606px;top:726.00px;width:152px;height:30px;line-height:30px;font-size:19.5px;font-weight:700;color:#3a67c9;text-align:center;white-space:nowrap;">5</div><div style="position:absolute;left:606px;top:757.00px;width:152px;height:30px;line-height:30px;font-size:19.5px;font-weight:700;color:#3a67c9;text-align:center;white-space:nowrap;">5</div><div style="position:absolute;left:606px;top:788.00px;width:152px;height:30px;line-height:30px;font-size:19.5px;font-weight:700;color:#3a67c9;text-align:center;white-space:nowrap;">5</div><div style="position:absolute;left:606px;top:819.00px;width:152px;height:30px;line-height:30px;font-size:19.5px;font-weight:700;color:#3a67c9;text-align:center;white-space:nowrap;">5</div><div style="position:absolute;left:606px;top:850.00px;width:152px;height:30px;line-height:30px;font-size:19.5px;font-weight:700;color:#3a67c9;text-align:center;white-space:nowrap;">5</div><div style="position:absolute;left:606px;top:881.00px;width:152px;height:30px;line-height:30px;font-size:19.5px;font-weight:700;color:#3a67c9;text-align:center;white-space:nowrap;">5</div><div style="position:absolute;left:606px;top:912.00px;width:152px;height:30px;line-height:30px;font-size:19.5px;font-weight:700;color:#3a67c9;text-align:center;white-space:nowrap;">7</div><div style="position:absolute;left:606px;top:943.00px;width:152px;height:30px;line-height:30px;font-size:19.5px;font-weight:700;color:#3a67c9;text-align:center;white-space:nowrap;">7</div><div style="position:absolute;left:606px;top:974.00px;width:152px;height:30px;line-height:30px;font-size:19.5px;font-weight:700;color:#3a67c9;text-align:center;white-space:nowrap;">7</div><div style="position:absolute;left:843px;top:261px;width:772px;height:92px;background:#e2efda;"></div><div style="position:absolute;left:843px;top:353px;width:772px;height:635px;background:#e2efda;"></div><div style="position:absolute;left:843px;top:261px;width:772px;height:2px;background:#000;"></div><div style="position:absolute;left:843px;top:291px;width:772px;height:2px;background:#000;"></div><div style="position:absolute;left:843px;top:322px;width:772px;height:1px;background:#000;"></div><div style="position:absolute;left:843px;top:351px;width:772px;height:2px;background:#000;"></div><div style="position:absolute;left:843px;top:383px;width:772px;height:1px;background:#000;"></div><div style="position:absolute;left:843px;top:414px;width:772px;height:1px;background:#000;"></div><div style="position:absolute;left:843px;top:445px;width:772px;height:1px;background:#000;"></div><div style="position:absolute;left:843px;top:476px;width:772px;height:1px;background:#000;"></div><div style="position:absolute;left:843px;top:507px;width:772px;height:1px;background:#000;"></div><div style="position:absolute;left:843px;top:538px;width:772px;height:1px;background:#000;"></div><div style="position:absolute;left:843px;top:569px;width:772px;height:1px;background:#000;"></div><div style="position:absolute;left:843px;top:600px;width:772px;height:1px;background:#000;"></div><div style="position:absolute;left:843px;top:631px;width:772px;height:1px;background:#000;"></div><div style="position:absolute;left:843px;top:662px;width:772px;height:1px;background:#000;"></div><div style="position:absolute;left:843px;top:693px;width:772px;height:1px;background:#000;"></div><div style="position:absolute;left:843px;top:724px;width:772px;height:1px;background:#000;"></div><div style="position:absolute;left:843px;top:755px;width:772px;height:1px;background:#000;"></div><div style="position:absolute;left:843px;top:786px;width:772px;height:1px;background:#000;"></div><div style="position:absolute;left:843px;top:817px;width:772px;height:1px;background:#000;"></div><div style="position:absolute;left:843px;top:848px;width:772px;height:1px;background:#000;"></div><div style="position:absolute;left:843px;top:879px;width:772px;height:1px;background:#000;"></div><div style="position:absolute;left:843px;top:910px;width:772px;height:1px;background:#000;"></div><div style="position:absolute;left:843px;top:941px;width:772px;height:1px;background:#000;"></div><div style="position:absolute;left:843px;top:972px;width:772px;height:1px;background:#000;"></div><div style="position:absolute;left:843px;top:261px;width:2px;height:727px;background:#000;"></div><div style="position:absolute;left:1613px;top:261px;width:2px;height:727px;background:#000;"></div><div style="position:absolute;left:997px;top:291px;width:2px;height:697px;background:#000;"></div><div style="position:absolute;left:1165px;top:291px;width:2px;height:697px;background:#000;"></div><div style="position:absolute;left:1294px;top:291px;width:2px;height:697px;background:#000;"></div><div style="position:absolute;left:845px;top:263.00px;width:768px;height:30px;line-height:30px;font-size:19.5px;font-weight:700;color:#000;text-align:center;white-space:nowrap;letter-spacing:-0.3px;">Indicators for sanity check</div><div style="position:absolute;left:845px;top:293.00px;width:152px;height:30px;line-height:30px;font-size:20px;font-weight:400;color:#000;text-align:center;white-space:nowrap;letter-spacing:0.45px;">Diffuser depth</div><div style="position:absolute;left:845px;top:323.00px;width:152px;height:30px;line-height:30px;font-size:20px;font-weight:400;color:#000;text-align:center;white-space:nowrap;letter-spacing:0.45px;">m</div><div style="position:absolute;left:845px;top:354.00px;width:152px;height:30px;line-height:30px;font-size:19.5px;font-weight:700;color:#000;text-align:center;white-space:nowrap;">4.75</div><div style="position:absolute;left:845px;top:385.00px;width:152px;height:30px;line-height:30px;font-size:19.5px;font-weight:700;color:#000;text-align:center;white-space:nowrap;">4.75</div><div style="position:absolute;left:845px;top:416.00px;width:152px;height:30px;line-height:30px;font-size:19.5px;font-weight:700;color:#000;text-align:center;white-space:nowrap;">4.75</div><div style="position:absolute;left:845px;top:447.00px;width:152px;height:30px;line-height:30px;font-size:19.5px;font-weight:700;color:#000;text-align:center;white-space:nowrap;">4.75</div><div style="position:absolute;left:845px;top:478.00px;width:152px;height:30px;line-height:30px;font-size:19.5px;font-weight:700;color:#000;text-align:center;white-space:nowrap;">4.75</div><div style="position:absolute;left:845px;top:509.00px;width:152px;height:30px;line-height:30px;font-size:19.5px;font-weight:700;color:#000;text-align:center;white-space:nowrap;">4.75</div><div style="position:absolute;left:845px;top:540.00px;width:152px;height:30px;line-height:30px;font-size:19.5px;font-weight:700;color:#000;text-align:center;white-space:nowrap;">4.75</div><div style="position:absolute;left:845px;top:571.00px;width:152px;height:30px;line-height:30px;font-size:19.5px;font-weight:700;color:#000;text-align:center;white-space:nowrap;">4.75</div><div style="position:absolute;left:845px;top:602.00px;width:152px;height:30px;line-height:30px;font-size:19.5px;font-weight:700;color:#000;text-align:center;white-space:nowrap;">4.75</div><div style="position:absolute;left:845px;top:633.00px;width:152px;height:30px;line-height:30px;font-size:19.5px;font-weight:700;color:#000;text-align:center;white-space:nowrap;">4.75</div><div style="position:absolute;left:845px;top:664.00px;width:152px;height:30px;line-height:30px;font-size:19.5px;font-weight:700;color:#000;text-align:center;white-space:nowrap;">4.75</div><div style="position:absolute;left:845px;top:695.00px;width:152px;height:30px;line-height:30px;font-size:19.5px;font-weight:700;color:#000;text-align:center;white-space:nowrap;">4.75</div><div style="position:absolute;left:845px;top:726.00px;width:152px;height:30px;line-height:30px;font-size:19.5px;font-weight:700;color:#000;text-align:center;white-space:nowrap;">4.75</div><div style="position:absolute;left:845px;top:757.00px;width:152px;height:30px;line-height:30px;font-size:19.5px;font-weight:700;color:#000;text-align:center;white-space:nowrap;">4.75</div><div style="position:absolute;left:845px;top:788.00px;width:152px;height:30px;line-height:30px;font-size:19.5px;font-weight:700;color:#000;text-align:center;white-space:nowrap;">4.75</div><div style="position:absolute;left:845px;top:819.00px;width:152px;height:30px;line-height:30px;font-size:19.5px;font-weight:700;color:#000;text-align:center;white-space:nowrap;">4.75</div><div style="position:absolute;left:845px;top:850.00px;width:152px;height:30px;line-height:30px;font-size:19.5px;font-weight:700;color:#000;text-align:center;white-space:nowrap;">4.75</div><div style="position:absolute;left:845px;top:881.00px;width:152px;height:30px;line-height:30px;font-size:19.5px;font-weight:700;color:#000;text-align:center;white-space:nowrap;">4.75</div><div style="position:absolute;left:845px;top:912.00px;width:152px;height:30px;line-height:30px;font-size:19.5px;font-weight:700;color:#000;text-align:center;white-space:nowrap;">6.75</div><div style="position:absolute;left:845px;top:943.00px;width:152px;height:30px;line-height:30px;font-size:19.5px;font-weight:700;color:#000;text-align:center;white-space:nowrap;">6.75</div><div style="position:absolute;left:845px;top:974.00px;width:152px;height:30px;line-height:30px;font-size:19.5px;font-weight:700;color:#000;text-align:center;white-space:nowrap;">6.75</div><div style="position:absolute;left:999px;top:293.00px;width:166px;height:30px;line-height:30px;font-size:20px;font-weight:400;color:#000;text-align:center;white-space:nowrap;letter-spacing:0.45px;">Diffuser density</div><div style="position:absolute;left:999px;top:323.00px;width:166px;height:30px;line-height:30px;font-size:20px;font-weight:400;color:#000;text-align:center;white-space:nowrap;letter-spacing:0.45px;">%</div><div style="position:absolute;left:1157px;top:293px;width:0;height:0;border-top:8px solid #ff0000;border-left:8px solid transparent;"></div><div style="position:absolute;left:999px;top:354.00px;width:166px;height:30px;line-height:30px;font-size:19.5px;font-weight:700;color:#000;text-align:center;white-space:nowrap;">22.52</div><div style="position:absolute;left:999px;top:385.00px;width:166px;height:30px;line-height:30px;font-size:19.5px;font-weight:700;color:#000;text-align:center;white-space:nowrap;">22.52</div><div style="position:absolute;left:999px;top:416.00px;width:166px;height:30px;line-height:30px;font-size:19.5px;font-weight:700;color:#000;text-align:center;white-space:nowrap;">22.52</div><div style="position:absolute;left:999px;top:447.00px;width:166px;height:30px;line-height:30px;font-size:19.5px;font-weight:700;color:#000;text-align:center;white-space:nowrap;">22.52</div><div style="position:absolute;left:999px;top:478.00px;width:166px;height:30px;line-height:30px;font-size:19.5px;font-weight:700;color:#000;text-align:center;white-space:nowrap;">22.52</div><div style="position:absolute;left:999px;top:509.00px;width:166px;height:30px;line-height:30px;font-size:19.5px;font-weight:700;color:#000;text-align:center;white-space:nowrap;">22.52</div><div style="position:absolute;left:999px;top:540.00px;width:166px;height:30px;line-height:30px;font-size:19.5px;font-weight:700;color:#000;text-align:center;white-space:nowrap;">22.52</div><div style="position:absolute;left:999px;top:571.00px;width:166px;height:30px;line-height:30px;font-size:19.5px;font-weight:700;color:#000;text-align:center;white-space:nowrap;">22.52</div><div style="position:absolute;left:999px;top:602.00px;width:166px;height:30px;line-height:30px;font-size:19.5px;font-weight:700;color:#000;text-align:center;white-space:nowrap;">22.52</div><div style="position:absolute;left:999px;top:633.00px;width:166px;height:30px;line-height:30px;font-size:19.5px;font-weight:700;color:#000;text-align:center;white-space:nowrap;">22.52</div><div style="position:absolute;left:999px;top:664.00px;width:166px;height:30px;line-height:30px;font-size:19.5px;font-weight:700;color:#000;text-align:center;white-space:nowrap;">22.52</div><div style="position:absolute;left:999px;top:695.00px;width:166px;height:30px;line-height:30px;font-size:19.5px;font-weight:700;color:#000;text-align:center;white-space:nowrap;">22.52</div><div style="position:absolute;left:999px;top:726.00px;width:166px;height:30px;line-height:30px;font-size:19.5px;font-weight:700;color:#000;text-align:center;white-space:nowrap;">5.16</div><div style="position:absolute;left:999px;top:757.00px;width:166px;height:30px;line-height:30px;font-size:19.5px;font-weight:700;color:#000;text-align:center;white-space:nowrap;">5.16</div><div style="position:absolute;left:999px;top:788.00px;width:166px;height:30px;line-height:30px;font-size:19.5px;font-weight:700;color:#000;text-align:center;white-space:nowrap;">5.16</div><div style="position:absolute;left:999px;top:819.00px;width:166px;height:30px;line-height:30px;font-size:19.5px;font-weight:700;color:#000;text-align:center;white-space:nowrap;">5.16</div><div style="position:absolute;left:999px;top:850.00px;width:166px;height:30px;line-height:30px;font-size:19.5px;font-weight:700;color:#000;text-align:center;white-space:nowrap;">5.16</div><div style="position:absolute;left:999px;top:881.00px;width:166px;height:30px;line-height:30px;font-size:19.5px;font-weight:700;color:#000;text-align:center;white-space:nowrap;">5.16</div><div style="position:absolute;left:999px;top:912.00px;width:166px;height:30px;line-height:30px;font-size:19.5px;font-weight:700;color:#000;text-align:center;white-space:nowrap;">5.16</div><div style="position:absolute;left:999px;top:943.00px;width:166px;height:30px;line-height:30px;font-size:19.5px;font-weight:700;color:#000;text-align:center;white-space:nowrap;">5.16</div><div style="position:absolute;left:999px;top:974.00px;width:166px;height:30px;line-height:30px;font-size:19.5px;font-weight:700;color:#000;text-align:center;white-space:nowrap;">5.16</div><div style="position:absolute;left:1167px;top:293.00px;width:127px;height:30px;line-height:30px;font-size:20px;font-weight:400;color:#000;text-align:center;white-space:nowrap;letter-spacing:-2.0px;">SSOTE</div><div style="position:absolute;left:1167px;top:323.00px;width:127px;height:30px;line-height:30px;font-size:20px;font-weight:400;color:#000;text-align:center;white-space:nowrap;letter-spacing:0.45px;">%/m</div><div style="position:absolute;left:1286px;top:293px;width:0;height:0;border-top:8px solid #ff0000;border-left:8px solid transparent;"></div><div style="position:absolute;left:1167px;top:354.00px;width:127px;height:30px;line-height:30px;font-size:19.5px;font-weight:700;color:#000;text-align:center;white-space:nowrap;">9.22</div><div style="position:absolute;left:1167px;top:385.00px;width:127px;height:30px;line-height:30px;font-size:19.5px;font-weight:700;color:#000;text-align:center;white-space:nowrap;">9.29</div><div style="position:absolute;left:1167px;top:416.00px;width:127px;height:30px;line-height:30px;font-size:19.5px;font-weight:700;color:#000;text-align:center;white-space:nowrap;">8.81</div><div style="position:absolute;left:1167px;top:447.00px;width:127px;height:30px;line-height:30px;font-size:19.5px;font-weight:700;color:#000;text-align:center;white-space:nowrap;">8.80</div><div style="position:absolute;left:1167px;top:478.00px;width:127px;height:30px;line-height:30px;font-size:19.5px;font-weight:700;color:#000;text-align:center;white-space:nowrap;">8.81</div><div style="position:absolute;left:1167px;top:509.00px;width:127px;height:30px;line-height:30px;font-size:19.5px;font-weight:700;color:#000;text-align:center;white-space:nowrap;">8.58</div><div style="position:absolute;left:1167px;top:540.00px;width:127px;height:30px;line-height:30px;font-size:19.5px;font-weight:700;color:#000;text-align:center;white-space:nowrap;">8.37</div><div style="position:absolute;left:1167px;top:571.00px;width:127px;height:30px;line-height:30px;font-size:19.5px;font-weight:700;color:#000;text-align:center;white-space:nowrap;">8.20</div><div style="position:absolute;left:1167px;top:602.00px;width:127px;height:30px;line-height:30px;font-size:19.5px;font-weight:700;color:#000;text-align:center;white-space:nowrap;">8.01</div><div style="position:absolute;left:1167px;top:633.00px;width:127px;height:30px;line-height:30px;font-size:19.5px;font-weight:700;color:#000;text-align:center;white-space:nowrap;">7.87</div><div style="position:absolute;left:1167px;top:664.00px;width:127px;height:30px;line-height:30px;font-size:19.5px;font-weight:700;color:#000;text-align:center;white-space:nowrap;">7.48</div><div style="position:absolute;left:1167px;top:695.00px;width:127px;height:30px;line-height:30px;font-size:19.5px;font-weight:700;color:#000;text-align:center;white-space:nowrap;">7.35</div><div style="position:absolute;left:1167px;top:726.00px;width:127px;height:30px;line-height:30px;font-size:19.5px;font-weight:700;color:#000;text-align:center;white-space:nowrap;">7.49</div><div style="position:absolute;left:1167px;top:757.00px;width:127px;height:30px;line-height:30px;font-size:19.5px;font-weight:700;color:#000;text-align:center;white-space:nowrap;">6.94</div><div style="position:absolute;left:1167px;top:788.00px;width:127px;height:30px;line-height:30px;font-size:19.5px;font-weight:700;color:#000;text-align:center;white-space:nowrap;">6.74</div><div style="position:absolute;left:1167px;top:819.00px;width:127px;height:30px;line-height:30px;font-size:19.5px;font-weight:700;color:#000;text-align:center;white-space:nowrap;">6.51</div><div style="position:absolute;left:1167px;top:850.00px;width:127px;height:30px;line-height:30px;font-size:19.5px;font-weight:700;color:#000;text-align:center;white-space:nowrap;">6.25</div><div style="position:absolute;left:1167px;top:881.00px;width:127px;height:30px;line-height:30px;font-size:19.5px;font-weight:700;color:#000;text-align:center;white-space:nowrap;">5.94</div><div style="position:absolute;left:1167px;top:912.00px;width:127px;height:30px;line-height:30px;font-size:19.5px;font-weight:700;color:#000;text-align:center;white-space:nowrap;">6.73</div><div style="position:absolute;left:1167px;top:943.00px;width:127px;height:30px;line-height:30px;font-size:19.5px;font-weight:700;color:#000;text-align:center;white-space:nowrap;">6.33</div><div style="position:absolute;left:1167px;top:974.00px;width:127px;height:30px;line-height:30px;font-size:19.5px;font-weight:700;color:#000;text-align:center;white-space:nowrap;">5.96</div><div style="position:absolute;left:1296px;top:293.00px;width:317px;height:30px;line-height:30px;font-size:20px;font-weight:400;color:#000;text-align:center;white-space:nowrap;letter-spacing:0.45px;">Air flux (flow per diffuser area)</div><div style="position:absolute;left:1296px;top:323.00px;width:317px;height:30px;line-height:30px;font-size:20px;font-weight:400;color:#000;text-align:center;white-space:nowrap;letter-spacing:1.0px;">m³/m²/h</div><div style="position:absolute;left:1605px;top:293px;width:0;height:0;border-top:8px solid #ff0000;border-left:8px solid transparent;"></div><div style="position:absolute;left:1296px;top:354.00px;width:317px;height:30px;line-height:30px;font-size:19.5px;font-weight:700;color:#000;text-align:center;white-space:nowrap;">7.43</div><div style="position:absolute;left:1296px;top:385.00px;width:317px;height:30px;line-height:30px;font-size:19.5px;font-weight:700;color:#000;text-align:center;white-space:nowrap;">11.03</div><div style="position:absolute;left:1296px;top:416.00px;width:317px;height:30px;line-height:30px;font-size:19.5px;font-weight:700;color:#000;text-align:center;white-space:nowrap;">14.75</div><div style="position:absolute;left:1296px;top:447.00px;width:317px;height:30px;line-height:30px;font-size:19.5px;font-weight:700;color:#000;text-align:center;white-space:nowrap;">14.75</div><div style="position:absolute;left:1296px;top:478.00px;width:317px;height:30px;line-height:30px;font-size:19.5px;font-weight:700;color:#000;text-align:center;white-space:nowrap;">14.75</div><div style="position:absolute;left:1296px;top:509.00px;width:317px;height:30px;line-height:30px;font-size:19.5px;font-weight:700;color:#000;text-align:center;white-space:nowrap;">22.18</div><div style="position:absolute;left:1296px;top:540.00px;width:317px;height:30px;line-height:30px;font-size:19.5px;font-weight:700;color:#000;text-align:center;white-space:nowrap;">29.62</div><div style="position:absolute;left:1296px;top:571.00px;width:317px;height:30px;line-height:30px;font-size:19.5px;font-weight:700;color:#000;text-align:center;white-space:nowrap;">37.05</div><div style="position:absolute;left:1296px;top:602.00px;width:317px;height:30px;line-height:30px;font-size:19.5px;font-weight:700;color:#000;text-align:center;white-space:nowrap;">44.36</div><div style="position:absolute;left:1296px;top:633.00px;width:317px;height:30px;line-height:30px;font-size:19.5px;font-weight:700;color:#000;text-align:center;white-space:nowrap;">66.67</div><div style="position:absolute;left:1296px;top:664.00px;width:317px;height:30px;line-height:30px;font-size:19.5px;font-weight:700;color:#000;text-align:center;white-space:nowrap;">88.85</div><div style="position:absolute;left:1296px;top:695.00px;width:317px;height:30px;line-height:30px;font-size:19.5px;font-weight:700;color:#000;text-align:center;white-space:nowrap;">128.75</div><div style="position:absolute;left:1296px;top:726.00px;width:317px;height:30px;line-height:30px;font-size:19.5px;font-weight:700;color:#000;text-align:center;white-space:nowrap;">28.25</div><div style="position:absolute;left:1296px;top:757.00px;width:317px;height:30px;line-height:30px;font-size:19.5px;font-weight:700;color:#000;text-align:center;white-space:nowrap;">56.51</div><div style="position:absolute;left:1296px;top:788.00px;width:317px;height:30px;line-height:30px;font-size:19.5px;font-weight:700;color:#000;text-align:center;white-space:nowrap;">84.63</div><div style="position:absolute;left:1296px;top:819.00px;width:317px;height:30px;line-height:30px;font-size:19.5px;font-weight:700;color:#000;text-align:center;white-space:nowrap;">112.89</div><div style="position:absolute;left:1296px;top:850.00px;width:317px;height:30px;line-height:30px;font-size:19.5px;font-weight:700;color:#000;text-align:center;white-space:nowrap;">169.27</div><div style="position:absolute;left:1296px;top:881.00px;width:317px;height:30px;line-height:30px;font-size:19.5px;font-weight:700;color:#000;text-align:center;white-space:nowrap;">225.77</div><div style="position:absolute;left:1296px;top:912.00px;width:317px;height:30px;line-height:30px;font-size:19.5px;font-weight:700;color:#000;text-align:center;white-space:nowrap;">28.25</div><div style="position:absolute;left:1296px;top:943.00px;width:317px;height:30px;line-height:30px;font-size:19.5px;font-weight:700;color:#000;text-align:center;white-space:nowrap;">56.51</div><div style="position:absolute;left:1296px;top:974.00px;width:317px;height:30px;line-height:30px;font-size:19.5px;font-weight:700;color:#000;text-align:center;white-space:nowrap;">84.63</div></div><div style="position:absolute;left:1698px;top:201px;width:553px;height:92px;background:#e2efda;"></div><div style="position:absolute;left:2046px;top:233px;width:102px;height:58px;background:#ffffff;"></div><div style="position:absolute;left:1698px;top:201px;width:553px;height:2px;background:#000;"></div><div style="position:absolute;left:1698px;top:231px;width:553px;height:2px;background:#000;"></div><div style="position:absolute;left:1698px;top:262px;width:553px;height:1px;background:#000;"></div><div style="position:absolute;left:1698px;top:291px;width:553px;height:2px;background:#000;"></div><div style="position:absolute;left:1698px;top:201px;width:2px;height:92px;background:#000;"></div><div style="position:absolute;left:2044px;top:201px;width:2px;height:92px;background:#000;"></div><div style="position:absolute;left:2148px;top:201px;width:2px;height:92px;background:#000;"></div><div style="position:absolute;left:2249px;top:201px;width:2px;height:92px;background:#000;"></div><div style="position:absolute;left:1704px;top:202.50px;width:336px;height:30px;line-height:30px;font-size:19.5px;font-weight:700;color:#000;text-align:left;white-space:nowrap;transform:scaleX(0.94);transform-origin:left center;">Physical data</div><div style="position:absolute;left:2046px;top:202.50px;width:102px;height:30px;line-height:30px;font-size:19.5px;font-weight:700;color:#000;text-align:center;white-space:nowrap;letter-spacing:-0.3px;">Value</div><div style="position:absolute;left:2150px;top:202.50px;width:99px;height:30px;line-height:30px;font-size:19.5px;font-weight:700;color:#000;text-align:center;white-space:nowrap;letter-spacing:-0.3px;">Unit</div><div style="position:absolute;left:1704px;top:232.60px;width:336px;height:30px;line-height:30px;font-size:20px;font-weight:400;color:#000;text-align:left;white-space:nowrap;letter-spacing:0.5px;">Diffuser height from floor</div><div style="position:absolute;left:2046px;top:232.60px;width:102px;height:30px;line-height:30px;font-size:19.5px;font-weight:700;color:#3a67c9;text-align:center;white-space:nowrap;">0.25</div><div style="position:absolute;left:2150px;top:232.60px;width:99px;height:30px;line-height:30px;font-size:20px;font-weight:400;color:#000;text-align:center;white-space:nowrap;">m</div><div style="position:absolute;left:1704px;top:262.50px;width:336px;height:30px;line-height:30px;font-size:20px;font-weight:400;color:#000;text-align:left;white-space:nowrap;letter-spacing:0.5px;">Area per diffuser</div><div style="position:absolute;left:2046px;top:262.50px;width:102px;height:30px;line-height:30px;font-size:19.5px;font-weight:700;color:#3a67c9;text-align:center;white-space:nowrap;">0.0807</div><div style="position:absolute;left:2150px;top:262.50px;width:99px;height:30px;line-height:30px;font-size:20px;font-weight:400;color:#000;text-align:center;white-space:nowrap;">m²</div><div style="position:absolute;left:2140px;top:233px;width:0;height:0;border-top:8px solid #ff0000;border-left:8px solid transparent;"></div><div style="position:absolute;left:2140px;top:263px;width:0;height:0;border-top:8px solid #ff0000;border-left:8px solid transparent;"></div><div style="position:absolute;left:1698px;top:321px;width:452px;height:435px;background:#f2f2f2;"></div><div style="position:absolute;left:1698px;top:321px;width:452px;height:2px;background:#000;"></div><div style="position:absolute;left:1698px;top:754px;width:452px;height:2px;background:#000;"></div><div style="position:absolute;left:1698px;top:321px;width:2px;height:435px;background:#000;"></div><div style="position:absolute;left:2148px;top:321px;width:2px;height:435px;background:#000;"></div><div style="position:absolute;left:2045px;top:383px;width:1px;height:371px;background:#000;"></div><div style="position:absolute;left:1700px;top:414px;width:448px;height:1px;background:#000;"></div><div style="position:absolute;left:1700px;top:445px;width:448px;height:1px;background:#000;"></div><div style="position:absolute;left:1700px;top:476px;width:448px;height:1px;background:#000;"></div><div style="position:absolute;left:1700px;top:507px;width:448px;height:1px;background:#000;"></div><div style="position:absolute;left:1700px;top:538px;width:448px;height:1px;background:#000;"></div><div style="position:absolute;left:1700px;top:569px;width:448px;height:1px;background:#000;"></div><div style="position:absolute;left:1700px;top:600px;width:448px;height:1px;background:#000;"></div><div style="position:absolute;left:1700px;top:631px;width:448px;height:1px;background:#000;"></div><div style="position:absolute;left:1700px;top:662px;width:448px;height:1px;background:#000;"></div><div style="position:absolute;left:1700px;top:693px;width:448px;height:1px;background:#000;"></div><div style="position:absolute;left:1700px;top:724px;width:448px;height:1px;background:#000;"></div><div style="position:absolute;left:1704px;top:322.50px;width:436px;height:30px;line-height:30px;font-size:20px;font-weight:400;color:#000;text-align:left;white-space:nowrap;transform:scaleX(0.88);transform-origin:left center;">REFERENCE SHEET: DIFFUSER UNIT AREAS</div><div style="position:absolute;left:1704px;top:385.60px;width:336px;height:30px;line-height:30px;font-size:20px;font-weight:400;color:#000;text-align:left;white-space:nowrap;letter-spacing:0.45px;">Diffuser type</div><div style="position:absolute;left:2049px;top:385.80px;width:99px;height:30px;line-height:30px;font-size:20px;font-weight:400;color:#000;text-align:left;white-space:nowrap;letter-spacing:0.45px;">Area (m²)</div><div style="position:absolute;left:1704px;top:416.30px;width:336px;height:30px;line-height:30px;font-size:20px;font-weight:400;color:#000;text-align:left;white-space:nowrap;letter-spacing:0.4px;">14&quot; ceramic disc</div><div style="position:absolute;left:2046px;top:416.30px;width:99px;height:30px;line-height:30px;font-size:20px;font-weight:400;color:#000;text-align:right;white-space:nowrap;letter-spacing:0.3px;">0.0856</div><div style="position:absolute;left:1704px;top:447.30px;width:336px;height:30px;line-height:30px;font-size:20px;font-weight:400;color:#000;text-align:left;white-space:nowrap;letter-spacing:0.4px;">9&quot; ceramic disc</div><div style="position:absolute;left:2046px;top:447.30px;width:99px;height:30px;line-height:30px;font-size:20px;font-weight:400;color:#000;text-align:right;white-space:nowrap;letter-spacing:0.3px;">0.0373</div><div style="position:absolute;left:1704px;top:478.30px;width:336px;height:30px;line-height:30px;font-size:20px;font-weight:400;color:#000;text-align:left;white-space:nowrap;letter-spacing:0.4px;">14&quot; membrane disc</div><div style="position:absolute;left:2046px;top:478.30px;width:99px;height:30px;line-height:30px;font-size:20px;font-weight:400;color:#000;text-align:right;white-space:nowrap;letter-spacing:0.3px;">0.0636</div><div style="position:absolute;left:1704px;top:509.30px;width:336px;height:30px;line-height:30px;font-size:20px;font-weight:400;color:#000;text-align:left;white-space:nowrap;letter-spacing:0.4px;">9&quot; membrane disc</div><div style="position:absolute;left:2046px;top:509.30px;width:99px;height:30px;line-height:30px;font-size:20px;font-weight:400;color:#000;text-align:right;white-space:nowrap;letter-spacing:0.3px;">0.0263</div><div style="position:absolute;left:1704px;top:540.30px;width:336px;height:30px;line-height:30px;font-size:20px;font-weight:400;color:#000;text-align:left;white-space:nowrap;letter-spacing:0.4px;">7&quot; membrane disc</div><div style="position:absolute;left:2046px;top:540.30px;width:99px;height:30px;line-height:30px;font-size:20px;font-weight:400;color:#000;text-align:right;white-space:nowrap;letter-spacing:0.3px;">0.0159</div><div style="position:absolute;left:1704px;top:571.30px;width:336px;height:30px;line-height:30px;font-size:20px;font-weight:400;color:#000;text-align:left;white-space:nowrap;letter-spacing:0.4px;">5&quot; coarse bubble cap</div><div style="position:absolute;left:2046px;top:571.30px;width:99px;height:30px;line-height:30px;font-size:20px;font-weight:400;color:#000;text-align:right;white-space:nowrap;letter-spacing:0.3px;">0.0120</div><div style="position:absolute;left:1704px;top:602.30px;width:336px;height:30px;line-height:30px;font-size:20px;font-weight:400;color:#000;text-align:left;white-space:nowrap;letter-spacing:0.4px;">7&quot; ceramic dome</div><div style="position:absolute;left:2046px;top:602.30px;width:99px;height:30px;line-height:30px;font-size:20px;font-weight:400;color:#000;text-align:right;white-space:nowrap;letter-spacing:0.3px;">0.0438</div><div style="position:absolute;left:1704px;top:633.30px;width:336px;height:30px;line-height:30px;font-size:20px;font-weight:400;color:#000;text-align:left;white-space:nowrap;letter-spacing:0.4px;">12&quot; ceramic plate</div><div style="position:absolute;left:2046px;top:633.30px;width:99px;height:30px;line-height:30px;font-size:20px;font-weight:400;color:#000;text-align:right;white-space:nowrap;letter-spacing:0.3px;">0.0929</div><div style="position:absolute;left:1704px;top:664.30px;width:336px;height:30px;line-height:30px;font-size:20px;font-weight:400;color:#000;text-align:left;white-space:nowrap;letter-spacing:0.4px;">24&quot; x 2.5&quot; membrane tube (single)</div><div style="position:absolute;left:2046px;top:664.30px;width:99px;height:30px;line-height:30px;font-size:20px;font-weight:400;color:#000;text-align:right;white-space:nowrap;letter-spacing:0.3px;">0.0807</div><div style="position:absolute;left:1704px;top:695.30px;width:336px;height:30px;line-height:30px;font-size:20px;font-weight:400;color:#000;text-align:left;white-space:nowrap;letter-spacing:0.4px;">11' x 4' membrane panel</div><div style="position:absolute;left:2046px;top:695.30px;width:99px;height:30px;line-height:30px;font-size:20px;font-weight:400;color:#000;text-align:right;white-space:nowrap;letter-spacing:0.3px;">4.0877</div><div style="position:absolute;left:1704px;top:726.30px;width:336px;height:30px;line-height:30px;font-size:20px;font-weight:400;color:#000;text-align:left;white-space:nowrap;letter-spacing:0.4px;">3' 6&quot; x 11' 7 3/8&quot; membrane panel</div><div style="position:absolute;left:2046px;top:726.30px;width:99px;height:30px;line-height:30px;font-size:20px;font-weight:400;color:#000;text-align:right;white-space:nowrap;letter-spacing:0.3px;">3.7766</div><div style="position:absolute;left:2265px;top:190px;width:25px;height:775px;background:#505050;"></div><div style="position:absolute;left:2265px;top:165px;width:25px;height:25px;background:#969696;border:1px solid #3a3a3a;"></div><svg style="left:2270px;top:173px" width="14" height="8" viewBox="0 0 14 8"><path d="M1 7H13L7 1Z" fill="#3a3a3a"/></svg><div style="position:absolute;left:2265px;top:191px;width:25px;height:25px;background:#969696;border:1px solid #3a3a3a;"></div><div style="position:absolute;left:2265px;top:965px;width:25px;height:25px;background:#969696;border:1px solid #3a3a3a;"></div><svg style="left:2270px;top:974px" width="14" height="8" viewBox="0 0 14 8"><path d="M1 1H13L7 7Z" fill="#3a3a3a"/></svg><div style="position:absolute;left:1676px;top:992px;width:588px;height:25px;background:#505050;"></div><div style="position:absolute;left:1676px;top:992px;width:25px;height:25px;background:#969696;border:1px solid #3a3a3a;"></div><svg style="left:1683px;top:998px" width="8" height="14" viewBox="0 0 8 14"><path d="M7 1V13L1 7Z" fill="#3a3a3a"/></svg><div style="position:absolute;left:1700px;top:992px;width:482px;height:25px;background:#969696;border:1px solid #3a3a3a;"></div><div style="position:absolute;left:2239px;top:992px;width:25px;height:25px;background:#969696;border:1px solid #3a3a3a;"></div><svg style="left:2248px;top:998px" width="8" height="14" viewBox="0 0 8 14"><path d="M1 1V13L7 7Z" fill="#3a3a3a"/></svg><div style="position:absolute;left:1656px;top:997px;width:4px;height:4px;background:#f0f0f0;"></div><div style="position:absolute;left:1656px;top:1003px;width:4px;height:4px;background:#f0f0f0;"></div><div style="position:absolute;left:1656px;top:1009px;width:4px;height:4px;background:#f0f0f0;"></div><svg style="left:31px;top:998px" width="8" height="13" viewBox="0 0 8 13"><path d="M7 0.5V12.5L0.5 6.5Z" fill="#a8a8a8"/></svg><svg style="left:64px;top:998px" width="8" height="13" viewBox="0 0 8 13"><path d="M0.5 0.5V12.5L7 6.5Z" fill="#a8a8a8"/></svg><div style="position:absolute;left:120px;top:992px;width:1px;height:26px;background:#8c8c8c;"></div><div style="position:absolute;left:188px;top:992px;width:1px;height:26px;background:#8c8c8c;"></div><div style="position:absolute;left:558px;top:992px;width:1px;height:26px;background:#8c8c8c;"></div><div style="position:absolute;left:731px;top:992px;width:1px;height:26px;background:#8c8c8c;"></div><div style="position:absolute;left:868px;top:992px;width:1px;height:26px;background:#8c8c8c;"></div><div style="position:absolute;left:350px;top:988px;width:70px;height:29px;background:#ffffff;"></div><div style="position:absolute;left:350px;top:1017px;width:70px;height:2px;background:#177340;"></div><div style="position:absolute;left:133px;top:987.70px;width:200px;height:30px;line-height:30px;font-size:19.6px;font-weight:400;color:#ffffff;text-align:left;white-space:nowrap;">Help</div><div style="position:absolute;left:205px;top:987.70px;width:200px;height:30px;line-height:30px;font-size:19.6px;font-weight:400;color:#ffffff;text-align:left;white-space:nowrap;">Input methods</div><div style="position:absolute;left:435px;top:987.70px;width:200px;height:30px;line-height:30px;font-size:19.6px;font-weight:400;color:#ffffff;text-align:left;white-space:nowrap;">Calculations</div><div style="position:absolute;left:577px;top:987.70px;width:200px;height:30px;line-height:30px;font-size:19.6px;font-weight:400;color:#ffffff;text-align:left;white-space:nowrap;">Plot &amp; estimate</div><div style="position:absolute;left:746px;top:987.70px;width:200px;height:30px;line-height:30px;font-size:19.6px;font-weight:400;color:#ffffff;text-align:left;white-space:nowrap;">Sumo forms</div><div style="position:absolute;left:362px;top:987.70px;width:58px;height:30px;line-height:30px;font-size:19.6px;font-weight:700;color:#177340;text-align:left;white-space:nowrap;">Data</div><svg style="left:907px;top:993px" width="24" height="24" viewBox="0 0 24 24"><circle cx="12" cy="12" r="10.3" fill="none" stroke="#fff" stroke-width="1.7"/><path d="M12 7V17M7 12H17" stroke="#fff" stroke-width="2.3"/></svg><div style="position:absolute;left:12px;top:1025.00px;width:88px;height:30px;line-height:30px;font-size:14.6px;font-weight:400;color:#333;text-align:left;white-space:nowrap;">Ready</div><svg style="left:83px;top:1029px" width="24" height="22" viewBox="0 0 24 22"><path d="M6.8 18.1H0.9V1.3H20.7V7.2" fill="none" stroke="#262626" stroke-width="1.6"/><path d="M0.9 4.4H20.7" stroke="#262626" stroke-width="1.6"/><path d="M3.5 7.6H8.3M3.5 10.6H7.8M3.5 13.5H7" stroke="#262626" stroke-width="1.5" stroke-linecap="round"/><circle cx="14.6" cy="13.5" r="5.6" fill="none" stroke="#262626" stroke-width="1.6"/><circle cx="14.6" cy="13.5" r="2.5" fill="#262626"/></svg><svg style="left:129px;top:1028px" width="24" height="23" viewBox="0 0 24 23"><circle cx="10.4" cy="3.9" r="2.5" fill="none" stroke="#262626" stroke-width="1.5"/><path d="M11.6 17.8L10.4 15.2L9 19.6Q8 21.4 6.6 20.4Q5.6 19.6 6.5 16.5Q7.3 13 7 9.6L3 7.8Q1.2 6.6 2.4 5.2Q3.6 4.2 5.3 5.6L8.7 6.9H12.1L15.5 5.6Q17.2 4.2 18.4 5.2Q19.6 6.6 17.8 7.8L14.5 9.2" fill="none" stroke="#262626" stroke-width="1.5" stroke-linejoin="round"/><path d="M12.3 11.6L21.7 20.8M21.6 11.4L12.5 20.6" stroke="#262626" stroke-width="1.5"/></svg><div style="position:absolute;left:157px;top:1024.50px;width:243px;height:30px;line-height:30px;font-size:15.2px;font-weight:400;color:#333;text-align:left;white-space:nowrap;">Accessibility: Investigate</div><div style="position:absolute;left:1831px;top:1023px;width:60px;height:32px;background:#a9a6a3;"></div><svg style="left:1850px;top:1028px" width="21" height="20" viewBox="0 0 21 20"><rect x="1" y="1" width="18.5" height="18" fill="none" stroke="#333" stroke-width="1.6"/><path d="M7.2 1V19M13.3 1V19M1 7H19.5M1 13H19.5" stroke="#333" stroke-width="1.6"/></svg><svg style="left:1910px;top:1028px" width="22" height="20" viewBox="0 0 22 20"><rect x="1" y="1" width="19.5" height="18" fill="none" stroke="#333" stroke-width="1.6"/><rect x="5" y="4.5" width="11.5" height="11" fill="none" stroke="#333" stroke-width="1.4"/><path d="M7.5 8H14M7.5 10.5H14M7.5 13H14" stroke="#333" stroke-width="1.2"/></svg><svg style="left:1970px;top:1028px" width="22" height="20" viewBox="0 0 22 20"><rect x="1" y="1" width="19.5" height="18" fill="none" stroke="#333" stroke-width="1.6"/><path d="M6 1V9H1M6 9H11V1" fill="none" stroke="#333" stroke-width="1.4"/></svg><div style="position:absolute;left:2019px;top:1037px;width:12px;height:2px;background:#444;"></div><div style="position:absolute;left:2039px;top:1037px;width:148px;height:2px;background:#2a2a2a;"></div><div style="position:absolute;left:2109px;top:1030px;width:9px;height:17px;background:#7a7a7a;"></div><div style="position:absolute;left:2194px;top:1037px;width:13px;height:2px;background:#444;"></div><div style="position:absolute;left:2200px;top:1032px;width:2px;height:13px;background:#444;"></div><div style="position:absolute;left:2226px;top:1024.40px;width:64px;height:30px;line-height:30px;font-size:14.8px;font-weight:400;color:#333;text-align:left;white-space:nowrap;">100%</div><div style="position:absolute;left:2293px;top:99px;width:2px;height:956px;background:#4f4f4f;"></div></body></html>
